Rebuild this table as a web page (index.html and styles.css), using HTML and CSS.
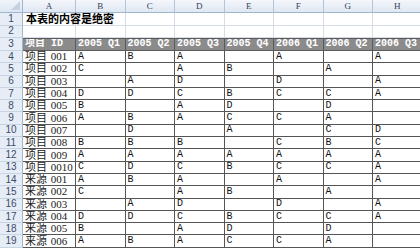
FILE: index.html
```html
<!DOCTYPE html>
<html lang="zh">
<head>
<meta charset="utf-8">
<title>Sheet</title>
<link rel="stylesheet" href="styles.css">
</head>
<body>
<div class="sheet">
  <div class="corner"><span class="tri"></span></div>
  <div class="ch">A</div><div class="ch">B</div><div class="ch">C</div><div class="ch">D</div><div class="ch">E</div><div class="ch">F</div><div class="ch">G</div><div class="ch">H</div>

  <div class="rh">1</div><div class="c title">本表的内容是绝密</div><div class="c"></div><div class="c"></div><div class="c"></div><div class="c"></div><div class="c"></div><div class="c"></div><div class="c"></div>
  <div class="rh">2</div><div class="c"></div><div class="c"></div><div class="c"></div><div class="c"></div><div class="c"></div><div class="c"></div><div class="c"></div><div class="c"></div>
  <div class="rh">3</div><div class="h">项目 ID</div><div class="h">2005 Q1</div><div class="h">2005 Q2</div><div class="h">2005 Q3</div><div class="h">2005 Q4</div><div class="h">2006 Q1</div><div class="h">2006 Q2</div><div class="h">2006 Q3</div>

  <div class="rh">4</div><div class="d k">项目 001</div><div class="d">A</div><div class="d">B</div><div class="d">A</div><div class="d"></div><div class="d">A</div><div class="d"></div><div class="d">A</div>
  <div class="rh">5</div><div class="d k">项目 002</div><div class="d">C</div><div class="d"></div><div class="d">A</div><div class="d">B</div><div class="d"></div><div class="d">A</div><div class="d"></div>
  <div class="rh">6</div><div class="d k">项目 003</div><div class="d"></div><div class="d">A</div><div class="d">D</div><div class="d"></div><div class="d">D</div><div class="d"></div><div class="d">A</div>
  <div class="rh">7</div><div class="d k">项目 004</div><div class="d">D</div><div class="d">D</div><div class="d">C</div><div class="d">B</div><div class="d">C</div><div class="d">C</div><div class="d">A</div>
  <div class="rh">8</div><div class="d k">项目 005</div><div class="d">B</div><div class="d"></div><div class="d">A</div><div class="d">D</div><div class="d"></div><div class="d">D</div><div class="d"></div>
  <div class="rh">9</div><div class="d k">项目 006</div><div class="d">A</div><div class="d">B</div><div class="d">A</div><div class="d">C</div><div class="d">C</div><div class="d">A</div><div class="d"></div>
  <div class="rh">10</div><div class="d k">项目 007</div><div class="d"></div><div class="d">D</div><div class="d"></div><div class="d">A</div><div class="d"></div><div class="d">C</div><div class="d">D</div>
  <div class="rh">11</div><div class="d k">项目 008</div><div class="d">B</div><div class="d">B</div><div class="d">B</div><div class="d"></div><div class="d">C</div><div class="d">B</div><div class="d">C</div>
  <div class="rh">12</div><div class="d k">项目 009</div><div class="d">A</div><div class="d">A</div><div class="d">A</div><div class="d">A</div><div class="d">A</div><div class="d">A</div><div class="d">A</div>
  <div class="rh">13</div><div class="d k">项目 0010</div><div class="d">C</div><div class="d">D</div><div class="d">C</div><div class="d">B</div><div class="d">C</div><div class="d">C</div><div class="d">A</div>
  <div class="rh">14</div><div class="d k">来源 001</div><div class="d">A</div><div class="d">B</div><div class="d">A</div><div class="d"></div><div class="d">A</div><div class="d"></div><div class="d">A</div>
  <div class="rh">15</div><div class="d k">来源 002</div><div class="d">C</div><div class="d"></div><div class="d">A</div><div class="d">B</div><div class="d"></div><div class="d">A</div><div class="d"></div>
  <div class="rh">16</div><div class="d k">来源 003</div><div class="d"></div><div class="d">A</div><div class="d">D</div><div class="d"></div><div class="d">D</div><div class="d"></div><div class="d">A</div>
  <div class="rh">17</div><div class="d k">来源 004</div><div class="d">D</div><div class="d">D</div><div class="d">C</div><div class="d">B</div><div class="d">C</div><div class="d">C</div><div class="d">A</div>
  <div class="rh">18</div><div class="d k">来源 005</div><div class="d">B</div><div class="d"></div><div class="d">A</div><div class="d">D</div><div class="d"></div><div class="d">D</div><div class="d"></div>
  <div class="rh">19</div><div class="d k">来源 006</div><div class="d">A</div><div class="d">B</div><div class="d">A</div><div class="d">C</div><div class="d">C</div><div class="d">A</div><div class="d"></div>
</div>
</body>
</html>
```
FILE: styles.css
```css
html, body {
  margin: 0;
  padding: 0;
  background: #ffffff;
  overflow: hidden;
}

.sheet {
  display: grid;
  grid-template-columns: 23px 53px repeat(7, 49.5px);
  grid-template-rows: 13px 12.5px 12px 13.5px repeat(16, 12.3px);
  width: 420px;
  height: 248px;
  overflow: hidden;
  font-family: "Liberation Mono", "Noto Sans CJK SC", monospace;
}

.sheet > div {
  box-sizing: border-box;
  overflow: hidden;
  white-space: nowrap;
  display: flex;
  align-items: center;
  min-width: 0;
  line-height: 1;
}

.corner {
  position: relative;
  background: linear-gradient(#f1f5fb, #dde6f2);
  border-right: 1px solid #9eb6ce;
  border-bottom: 1px solid #9eb6ce;
}

.corner .tri {
  position: absolute;
  right: 2px;
  bottom: 2px;
  width: 0;
  height: 0;
  border-left: 9px solid transparent;
  border-bottom: 9px solid #c5d1e1;
}

.ch {
  justify-content: center;
  background: linear-gradient(#f4f7fb, #dfe7f2);
  border-right: 1px solid #b1c4d8;
  border-bottom: 1px solid #9eb6ce;
  font-family: "Liberation Serif", serif;
  font-size: 9px;
  color: #34425a;
}

.rh {
  justify-content: center;
  background: #e6edf7;
  border-right: 1px solid #9eb6ce;
  border-bottom: 1px solid #c6d4e4;
  font-family: "Liberation Sans", sans-serif;
  font-size: 10px;
  color: #3c4c66;
}

.c {
  border-right: 1px solid #d6dde9;
  border-bottom: 1px solid #d6dde9;
}

.title {
  overflow: visible !important;
  padding-left: 3px;
  font-family: "Noto Sans CJK SC", sans-serif;
  font-weight: bold;
  font-size: 11px;
  color: #000;
  z-index: 1;
}

.h {
  background: #8b8b8b;
  border-top: 1px solid #5a5a5a;
  border-right: 1px solid #5a5a5a;
  border-bottom: 1px solid #5a5a5a;
  padding-left: 2px;
  color: #ffffff;
  font-weight: bold;
  font-size: 10px;
  font-family: "Liberation Mono", "Noto Sans CJK SC", monospace;
}

.d {
  border-right: 1px solid #555;
  border-bottom: 1px solid #555;
  padding-left: 2px;
  font-size: 10px;
  color: #111;
  font-family: "Liberation Mono", monospace;
}

.d.k {
  padding-left: 2px;
  font-size: 11px;
  font-family: "Liberation Serif", "Noto Sans CJK SC", serif;
  word-spacing: 1px;
  color: #222;
}
```
